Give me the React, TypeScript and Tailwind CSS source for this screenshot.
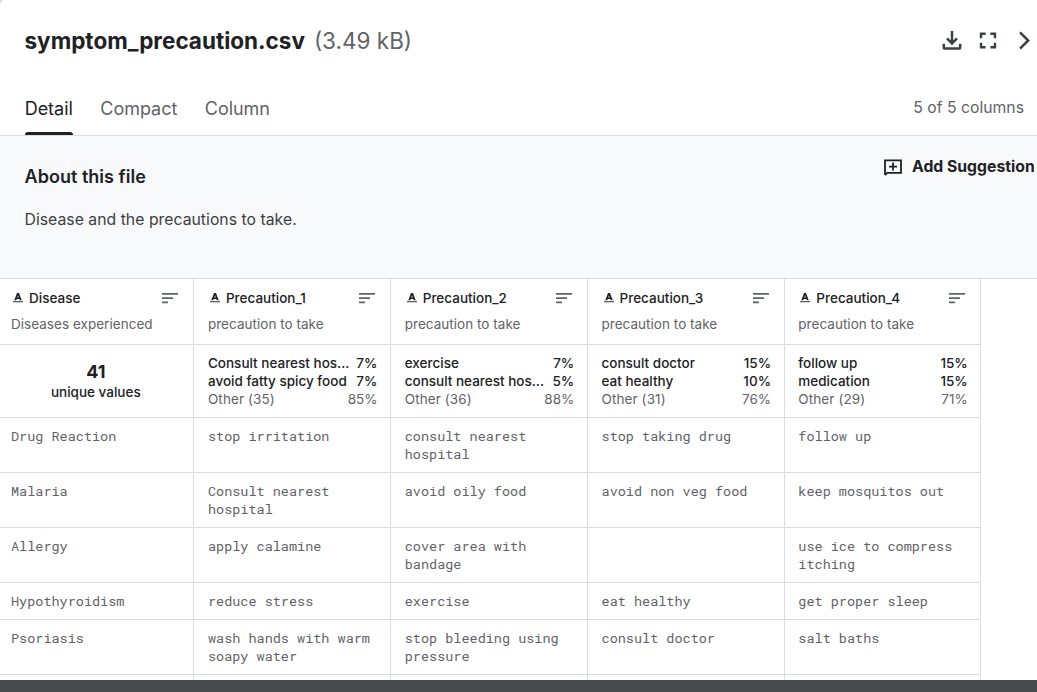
import React from "react";

type Stat = [string, string];

const columns: { name: string; note: string; stats?: Stat[] }[] = [
  { name: "Disease", note: "Diseases experienced" },
  { name: "Precaution_1", note: "precaution to take", stats: [["Consult nearest hos...", "7%"], ["avoid fatty spicy food", "7%"], ["Other (35)", "85%"]] },
  { name: "Precaution_2", note: "precaution to take", stats: [["exercise", "7%"], ["consult nearest hos...", "5%"], ["Other (36)", "88%"]] },
  { name: "Precaution_3", note: "precaution to take", stats: [["consult doctor", "15%"], ["eat healthy", "10%"], ["Other (31)", "76%"]] },
  { name: "Precaution_4", note: "precaution to take", stats: [["follow up", "15%"], ["medication", "15%"], ["Other (29)", "71%"]] },
];

const rows = [
  ["Drug Reaction", "stop irritation", "consult nearest hospital", "stop taking drug", "follow up"],
  ["Malaria", "Consult nearest hospital", "avoid oily food", "avoid non veg food", "keep mosquitos out"],
  ["Allergy", "apply calamine", "cover area with bandage", "", "use ice to compress itching"],
  ["Hypothyroidism", "reduce stress", "exercise", "eat healthy", "get proper sleep"],
  ["Psoriasis", "wash hands with warm soapy water", "stop bleeding using pressure", "consult doctor", "salt baths"],
  ["", "", "", "", ""],
];

const rowGrid = "grid w-[981.4px] grid-cols-[194.25px_196.8px_196.8px_196.8px_196.7px]";
const cell = "border-r border-b border-[#dadce0]";

function DownloadIcon() {
  return (
    <svg width="20" height="20" viewBox="0 0 20 20" fill="none" stroke="#3c4043" strokeWidth="2.5">
      <path d="M10 0v12.5M5 7.4l5 5 5-5M1.8 12.8v3.4c0 .9.5 1.4 1.4 1.4h13.6c.9 0 1.4-.5 1.4-1.4v-3.4" />
    </svg>
  );
}

function FullscreenIcon() {
  return (
    <svg width="18" height="18" viewBox="0 0 18 18" fill="none" stroke="#3c4043" strokeWidth="2.4">
      <path d="M2 6.3V1.7H6.6M11.4 1.7H16v4.6M16 10.7v4.6h-4.6M6.6 15.3H2v-4.6" />
    </svg>
  );
}

function ChevronIcon() {
  return (
    <svg width="12" height="20" viewBox="0 0 12 20" fill="none" stroke="#3c4043" strokeWidth="2.5">
      <path d="M2 1.3 10.2 9.5 2 17.7" />
    </svg>
  );
}

function SuggestionIcon() {
  return (
    <svg width="18" height="18" viewBox="0 0 18 18" fill="none" stroke="#202124" strokeWidth="1.8">
      <path d="M1 16V1.4h16v12.5H3.2L1 16.1" />
      <path d="M9 3.6v8M5 7.6h8" />
    </svg>
  );
}

function TextTypeIcon() {
  return (
    <svg className="shrink-0" width="10" height="10" viewBox="0 0 10 10">
      <path fill="#202124" fillRule="evenodd" d="M4 0h2l2.7 7.2H6.8l-.5-1.3H3.7l-.5 1.3H1.3zM5 2.2 4.3 4.5h1.4z" />
      <path fill="#5f6368" d="M0 8h10v1.3H0z" />
    </svg>
  );
}

function SortIcon() {
  return (
    <svg className="block shrink-0" width="16" height="11" viewBox="0 0 16 11" fill="#5f6368">
      <path d="M0 0h16v1.8H0zM0 4.2h11v1.8H0zM0 8.4h6v1.8H0z" />
    </svg>
  );
}

export default function App() {
  return (
    <div className="h-[692px] w-[1037px] overflow-hidden bg-[#dadce0]">
      <div className="flex h-full flex-col overflow-hidden rounded-tl-[5px] bg-white font-['Inter',sans-serif] text-[#202124]">
        <header className="flex h-[82px] shrink-0 items-center pr-[7px] pl-[24.5px]">
          <h1 className="text-[22.5px] leading-7 font-bold">symptom_precaution.csv</h1>
          <span className="ml-[9px] text-[22.5px] leading-7 text-[#5f6368]">(3.49 kB)</span>
          <div className="ml-auto flex items-center">
            <DownloadIcon />
            <div className="ml-[17px]"><FullscreenIcon /></div>
            <div className="ml-[21px]"><ChevronIcon /></div>
          </div>
        </header>

        <div className="flex h-[54px] shrink-0 border-b border-[#dadce0] pr-[13px] pl-[24.7px]">
          <nav className="flex gap-[27.5px] text-[18px] tracking-[-0.03px] text-[#5f6368]">
            <div className="flex flex-col justify-between text-[#202124]">
              <span className="pt-[13px] leading-7">Detail</span>
              <span className="h-[3px] rounded-t-sm bg-[#202124]" />
            </div>
            <span className="pt-[13px] leading-7">Compact</span>
            <span className="pt-[13px] leading-7">Column</span>
          </nav>
          <span className="ml-auto pt-[14px] text-[15.75px] leading-6 text-[#5f6368]">5 of 5 columns</span>
        </div>

        <section className="flex h-[143px] shrink-0 justify-between overflow-hidden border-b border-[#dadce0] bg-[#f8f9fb] pr-[3px] pl-[24.5px]">
          <div>
            <h2 className="mt-[29px] text-[18px] leading-6 font-semibold tracking-[0.03px]">About this file</h2>
            <p className="mt-[19px] text-[15.75px] leading-6 tracking-[0.03px] text-[#3c4043]">Disease and the precautions to take.</p>
          </div>
          <div className="flex w-[150px] items-center gap-[10px] self-start overflow-hidden pt-[19px] whitespace-nowrap">
            <span className="shrink-0 pt-px"><SuggestionIcon /></span>
            <span className="text-[15.75px] leading-6 font-bold">Add Suggestion</span>
          </div>
        </section>

        <div className="min-h-0 flex-1 overflow-hidden">
          <div className={rowGrid}>
            {columns.map((c) => (
              <div key={c.name} className={`${cell} h-[66px] pt-[9px] pr-[15px] pl-[13.7px] first:pl-[11px]`}>
                <div className="flex h-5 items-center pl-[2px] font-medium">
                  <TextTypeIcon />
                  <span className="ml-[6px] text-[13.5px]">{c.name}</span>
                  <span className="ml-auto"><SortIcon /></span>
                </div>
                <div className="mt-[7px] text-[13.5px] leading-[18px] tracking-[0.03px] text-[#5f6368]">{c.note}</div>
              </div>
            ))}
          </div>

          <div className={rowGrid}>
            {columns.map((c) => (
              <div key={c.name} className={`${cell} h-[73px] pt-[9px] pr-[12.6px] pl-[13.7px] text-[13.5px] leading-[18px] font-medium first:pl-[11px]`}>
                {c.stats ? (
                  c.stats.map(([label, value], i) => (
                    <div key={label} className={i === 2 ? "flex justify-between font-normal text-[#5f6368]" : "flex justify-between"}>
                      <span className={i === 2 ? "tracking-[0.1px] whitespace-nowrap" : "whitespace-nowrap"}>{label}</span>
                      <span>{value}</span>
                    </div>
                  ))
                ) : (
                  <div className="pt-[6px] text-center">
                    <div className="text-[18px] leading-[23px] font-bold">41</div>
                    <div>unique values</div>
                  </div>
                )}
              </div>
            ))}
          </div>

          {rows.map((row, r) => (
            <div key={r} className={rowGrid}>
              {row.map((value, i) => (
                <div key={i} className={`${cell} min-h-[37px] py-[9px] pr-[10px] pl-[13.7px] font-['Roboto_Mono','Liberation_Mono',monospace] text-[13.5px] leading-[18px] text-[#5f6368] first:pl-[11px]`}>
                  {value}
                </div>
              ))}
            </div>
          ))}
        </div>

        <div className="h-3 shrink-0 bg-[#48494d]" />
      </div>
    </div>
  );
}
